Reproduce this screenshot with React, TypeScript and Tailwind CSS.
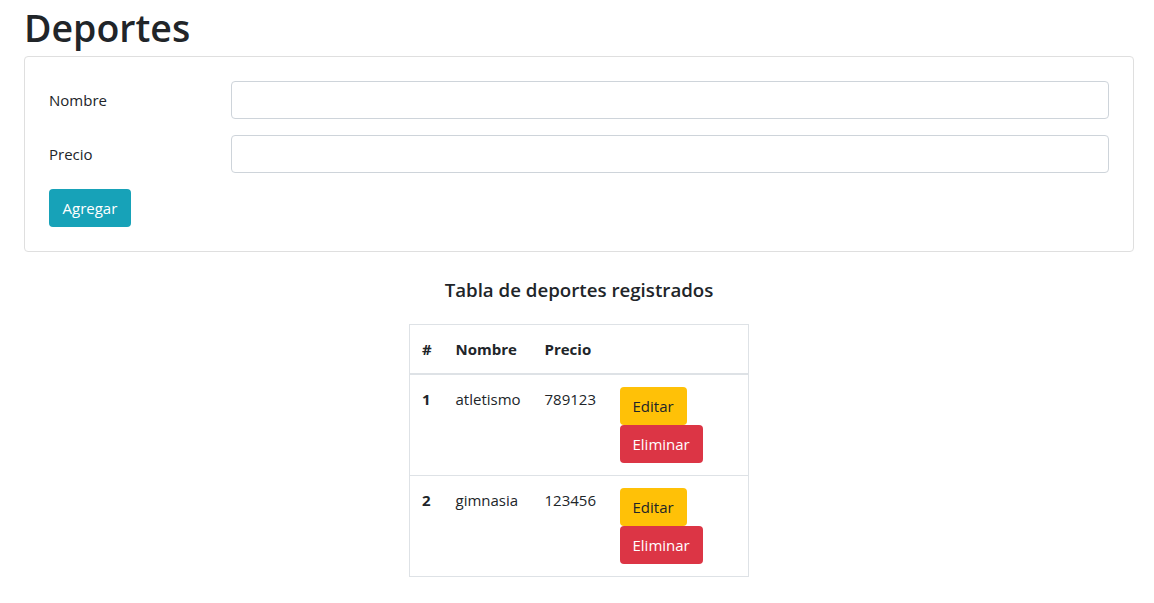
import { useState } from "react";

type Deporte = { id: number; nombre: string; precio: string };

const inicial: Deporte[] = [
  { id: 1, nombre: "atletismo", precio: "789123" },
  { id: 2, nombre: "gimnasia", precio: "123456" },
];

export default function App() {
  const [deportes] = useState<Deporte[]>(inicial);
  const [nombre, setNombre] = useState("");
  const [precio, setPrecio] = useState("");

  return (
    <div
      className="min-h-[603px] bg-white pl-6 pr-5 text-[15px] leading-6 text-[#212529]"
      style={{ fontFamily: '"Open Sans", "Noto Sans", sans-serif' }}
    >
      <h1 className="pt-1 text-[37.5px] font-semibold leading-[48px]">Deportes</h1>

      <div className="mt-1 rounded border border-[#dfdfdf] p-6">
        <div className="mb-4 flex items-center">
          <label className="w-[182px] shrink-0">Nombre</label>
          <input
            value={nombre}
            onChange={(e) => setNombre(e.target.value)}
            className="h-[38px] flex-1 rounded border border-[#ced4da] px-3 outline-none"
          />
        </div>
        <div className="mb-4 flex items-center">
          <label className="w-[182px] shrink-0">Precio</label>
          <input
            value={precio}
            onChange={(e) => setPrecio(e.target.value)}
            className="h-[38px] flex-1 rounded border border-[#ced4da] px-3 outline-none"
          />
        </div>
        <button className="h-[38px] rounded bg-[#17a2b8] px-[13.5px] text-white">
          Agregar
        </button>
      </div>

      <h5 className="mt-[26px] text-center text-[18.7px] font-semibold leading-6">
        Tabla de deportes registrados
      </h5>

      <div className="mt-[22px] flex justify-center">
        <table className="w-[340px] table-fixed border-collapse border border-[#dee2e6] text-left">
          <thead>
            <tr className="border-b-2 border-[#dee2e6]">
              <th className="w-[34px] p-3 font-bold">#</th>
              <th className="w-[89px] p-3 font-bold">Nombre</th>
              <th className="w-[75px] p-3 font-bold">Precio</th>
              <th className="p-3"></th>
            </tr>
          </thead>
          <tbody>
            {deportes.map((d) => (
              <tr key={d.id} className="border-t border-[#dee2e6] align-top">
                <th className="p-3 font-bold">{d.id}</th>
                <td className="p-3">{d.nombre}</td>
                <td className="p-3">{d.precio}</td>
                <td className="p-3">
                  <div className="flex flex-col items-start">
                    <button className="h-[38px] rounded bg-[#ffc107] px-[13px] text-[#212529]">
                      Editar
                    </button>
                    <button className="h-[38px] rounded bg-[#dc3545] px-[13px] text-white">
                      Eliminar
                    </button>
                  </div>
                </td>
              </tr>
            ))}
          </tbody>
        </table>
      </div>
    </div>
  );
}
